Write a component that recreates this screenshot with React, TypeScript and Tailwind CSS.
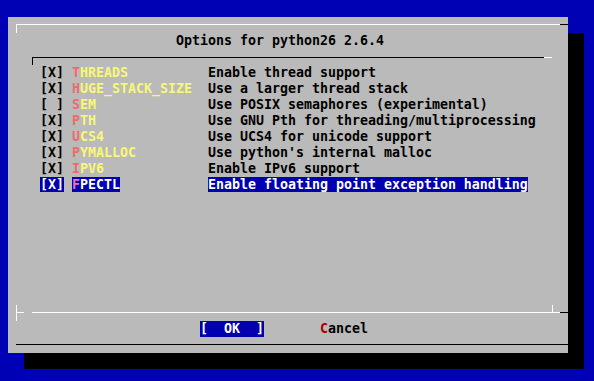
import React from "react";

const items: [boolean, string, string][] = [
  [true, "THREADS", "Enable thread support"],
  [true, "HUGE_STACK_SIZE", "Use a larger thread stack"],
  [false, "SEM", "Use POSIX semaphores (experimental)"],
  [true, "PTH", "Use GNU Pth for threading/multiprocessing"],
  [true, "UCS4", "Use UCS4 for unicode support"],
  [true, "PYMALLOC", "Use python's internal malloc"],
  [true, "IPV6", "Enable IPv6 support"],
  [true, "FPECTL", "Enable floating point exception handling"],
];

function Item({ on, name, desc, sel }: { on: boolean; name: string; desc: string; sel: boolean }) {
  return (
    <div className="flex h-[16px] pl-[32px] leading-[16px] whitespace-pre">
      <div className="w-[32px]">
        <span className={sel ? "bg-[#0000b0] text-white" : "text-black"}>{on ? "[X]" : "[ ]"}</span>
      </div>
      <div className="w-[136px]">
        <span className={sel ? "bg-[#0000b0]" : ""}>
          <span className={sel ? "text-[#f070b8]" : "text-[#ec6c6c]"}>{name[0]}</span>
          <span className={sel ? "text-white" : "text-[#f8f874]"}>{name.slice(1)}</span>
        </span>
      </div>
      <div>
        <span className={sel ? "bg-[#0000b0] text-white" : "text-black"}>{desc}</span>
      </div>
    </div>
  );
}

export default function App() {
  return (
    <div className="w-[594px] h-[381px] bg-[#0000b4] pt-[17px] pl-[8px] overflow-hidden font-['DejaVu_Sans_Mono',monospace] text-[13.29px] font-bold">
      <div className="w-[560px] h-[336px] bg-[#bababa] shadow-[16px_16px_0_0_#000]">
        {/* top border */}
        <div className="h-[16px] pl-[8px] pt-[7px] flex items-start">
          <div className="w-[544px] h-[9px] border-t border-l border-white" />
          <div className="w-[8px] h-[1px] border-t border-black" />
        </div>
        {/* title */}
        <div className="h-[16px] pl-[168px] leading-[16px] whitespace-pre text-black">Options for python26 2.6.4</div>
        {/* inner list box top */}
        <div className="h-[16px] pl-[24px] pt-[8px] flex items-start">
          <div className="w-[512px] h-[8px] border-t border-l border-black" />
          <div className="w-[8px] h-[1px] border-t border-white" />
        </div>
        {items.map((it, i) => (
          <Item key={it[1]} on={it[0]} name={it[1]} desc={it[2]} sel={i === items.length - 1} />
        ))}
        <div className="h-[112px]" />
        {/* separator */}
        <div className="h-[16px] pl-[8px] flex items-start">
          <div className="w-[8px] h-[16px] border-l border-white">
            <div className="h-[8px] border-b border-white" />
          </div>
          <div className="w-[8px]" />
          <div className="w-[520px] h-[8px] border-b border-white" />
          <div className="w-[8px] h-[8px] border-l border-b border-white" />
          <div className="w-[8px] h-[8px] border-b border-black" />
        </div>
        {/* buttons */}
        <div className="h-[16px] pl-[192px] flex leading-[16px] whitespace-pre">
          <span className="w-[64px] bg-[#0000b0] text-white">{"[  OK  ]"}</span>
          <span className="ml-[56px] text-black">
            <span className="text-[#a80000]">C</span>ancel
          </span>
        </div>
        {/* bottom line */}
        <div className="h-[16px] pl-[8px] flex items-start">
          <div className="w-[552px] h-[8px] border-b border-black" />
        </div>
      </div>
    </div>
  );
}
